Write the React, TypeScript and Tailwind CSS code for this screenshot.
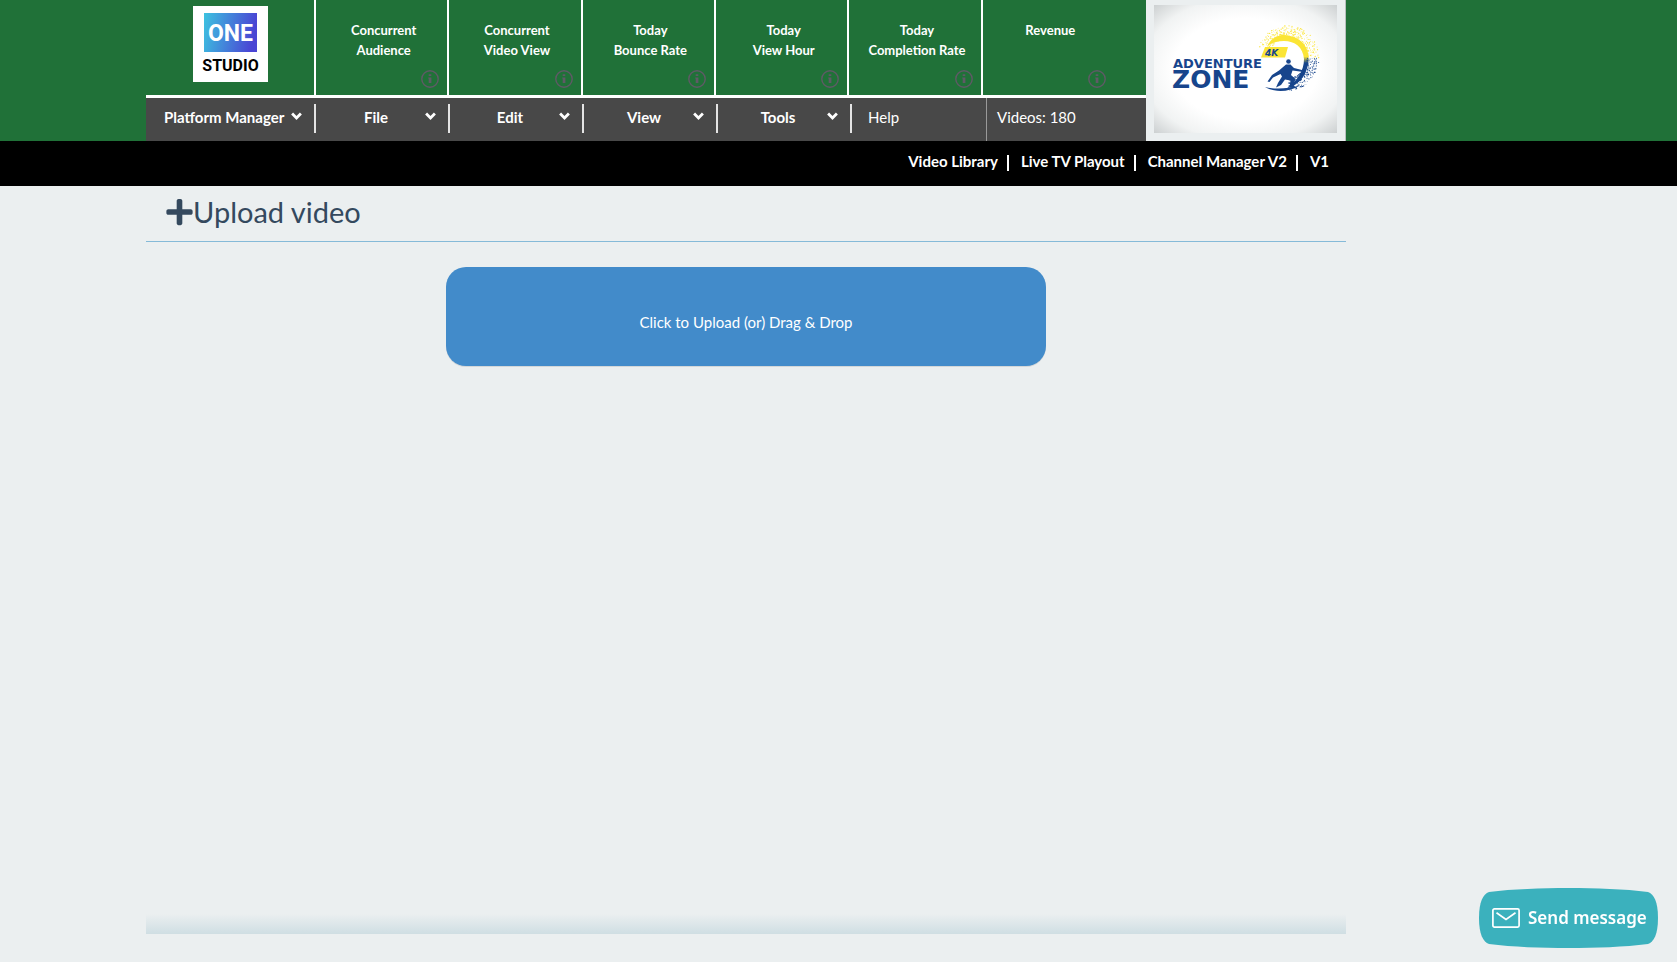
import React from "react";
import { FaPlus } from "react-icons/fa";

const stats = [
  ["Concurrent", "Audience"],
  ["Concurrent", "Video View"],
  ["Today", "Bounce Rate"],
  ["Today", "View Hour"],
  ["Today", "Completion Rate"],
  ["Revenue", ""],
];

const menus = ["File", "Edit", "View", "Tools"];
const links = ["Video Library", "Live TV Playout", "Channel Manager V2", "V1"];

function Chevron({ className = "" }: { className?: string }) {
  return (
    <svg viewBox="0 0 11 8" className={`h-2 w-[11px] ${className}`} aria-hidden="true">
      <path d="M1.100 1.600 5.500 6 9.900 1.600" fill="none" stroke="#fff" strokeWidth="2.800" />
    </svg>
  );
}

function InfoIcon() {
  return (
    <svg viewBox="0 0 18 18" className="size-[18px]" aria-hidden="true">
      <circle cx="9" cy="9" r="8.200" fill="none" stroke="#5f5a66" strokeWidth="1.400" />
      <path d="M7.700 4.200h2.600v1.800H7.700zM7.200 7.400h3.200v5.600H7.700V8.600h-.5z" fill="#5f5a66" />
    </svg>
  );
}

function StudioLogo() {
  return (
    <svg viewBox="0 0 75 76" className="h-[76px] w-[75px]" role="img" aria-label="One Studio">
      <defs>
        <linearGradient id="studio" x1="0" y1="0" x2="1" y2="0.15">
          <stop offset="0" stopColor="#3cc3e0" />
          <stop offset="1" stopColor="#4a45d4" />
        </linearGradient>
      </defs>
      <rect width="75" height="76" fill="#fff" />
      <rect x="11" y="7" width="53" height="39" fill="url(#studio)" />
      <text x="37.5" y="35" textAnchor="middle" fontFamily="Roboto, sans-serif" fontWeight="700" fontSize="23" fill="#fff">
        ONE
      </text>
      <text x="37.5" y="65" textAnchor="middle" fontFamily="Roboto, sans-serif" fontWeight="700" fontSize="16" fill="#000">
        STUDIO
      </text>
    </svg>
  );
}

function noise(n: number) {
  const v = Math.sin(n * 12.9898) * 43758.5453;
  return v - Math.floor(v);
}

// Deterministic spray of droplets around the wave ring.
const spray = Array.from({ length: 760 }, (_, i) => {
  const a = ((-205 + noise(i + 1) * 295) * Math.PI) / 180;
  const r = 19 + 12 * noise(i + 1000) ** 1.5;
  const x = 134 + r * Math.cos(a);
  const y = 53 + r * 1.05 * Math.sin(a);
  return { x, y, s: 0.25 + noise(i + 5000) * 0.4, navy: y > 53 };
}).filter((d) => d.y < 88 && !(d.x < 124 && d.y > 42));

function ChannelLogo() {
  return (
    <svg viewBox="0 0 183 128" className="h-32 w-[183px]" role="img" aria-label="Adventure Zone 4K">
      <defs>
        <radialGradient id="vignette" cx="0.5" cy="0.5" r="0.72">
          <stop offset="0.55" stopColor="#ffffff" />
          <stop offset="0.78" stopColor="#f1f3f3" />
          <stop offset="1" stopColor="#c9cdce" />
        </radialGradient>
        <linearGradient id="wave" x1="0" y1="0" x2="0" y2="1">
          <stop offset="0.4" stopColor="#fbe536" />
          <stop offset="0.52" stopColor="#17458c" />
        </linearGradient>
      </defs>
      <rect width="183" height="128" fill="url(#vignette)" />
      <path
        d="M113 42C117 31 128 28 136 31C150 34 157 46 154 60C151 73 144 80 132 84C143 76 150 66 150 54C149 42 141 36 130 36C122 36 117 38 113 42Z"
        fill="url(#wave)"
      />
      {spray.map((d, i) => (
        <circle key={i} cx={d.x} cy={d.y} r={d.s} fill={d.navy ? "#17458c" : "#fbe536"} />
      ))}
      <path d="M111 42h23l-3 10.500h-24z" fill="#fbe536" />
      <text x="111" y="50.500" fontFamily="DejaVu Sans, sans-serif" fontWeight="700" fontStyle="italic" fontSize="9" fill="#17458c">
        4K
      </text>
      <text x="19" y="63" fontFamily="DejaVu Sans, sans-serif" fontWeight="700" fontSize="13" fill="#17458c">
        ADVENTURE
      </text>
      <text x="18" y="83" fontFamily="DejaVu Sans, sans-serif" fontWeight="700" fontSize="25" fill="#17458c">
        ZONE
      </text>
      <g fill="#17458c">
        <circle cx="134.500" cy="56.500" r="2.300" />
        <path d="M132 59.500L136.500 59.500L140 63L150 65.500L149.500 67L138.500 65.500L137 70L141.500 74L139.500 80L142 83L135.500 82.500L136.500 75.500L131 74.500L127 80L122 82.500L124 78L128 71.500L126.500 69L119 72.500L115.500 77L113.500 76.500L118 70L125 65.500Z" />
        <path d="M111 82c10 2.500 22 2 35-1.500-8 5-18 6.500-26 4.800-4-.8-7-2-9-3.300z" />
      </g>
    </svg>
  );
}

export default function App() {
  return (
    <div className="flex min-h-screen flex-col bg-[#ebeff0] font-['Lato',sans-serif] text-[15px] leading-5">
      <header>
        <div className="bg-[#207138] pl-[146px]">
          <div className="flex max-w-[1200px]">
            <div className="min-w-0 flex-1">
              <div className="flex h-[98px] border-b-[3px] border-white">
                <a href="#home" className="flex w-[168px] shrink-0 justify-center pt-1.5">
                  <StudioLogo />
                </a>
                <div className="grid w-[800px] grid-cols-6">
                  {stats.map(([top, bottom], i) => (
                    <div key={i} className="flex flex-col border-l-2 border-white pt-5">
                      <p className="h-10 pl-1 text-center text-[13px] leading-5 font-bold whitespace-nowrap text-white">
                        {top}
                        <br />
                        {bottom}
                      </p>
                      <button type="button" aria-label={`About ${top} ${bottom}`} className="mt-2.5 mr-2 self-end">
                        <InfoIcon />
                      </button>
                    </div>
                  ))}
                </div>
              </div>
              <nav className="flex h-[43px] bg-[#484848] text-white">
                <button type="button" className="flex w-[168px] shrink-0 items-start gap-[7px] pt-[9px] pl-[18px] font-bold whitespace-nowrap">
                  Platform Manager
                  <Chevron className="mt-[5px]" />
                </button>
                {menus.map((m) => (
                  <div key={m} className="mt-1.5 h-[29px] w-[134px] border-l-2 border-[#e4e4e4] pt-[3px] pr-3">
                    <button type="button" className="relative w-full text-center font-bold">
                      {m}
                      <Chevron className="absolute top-[5px] right-0" />
                    </button>
                  </div>
                ))}
                <div className="mt-1.5 h-[29px] w-[136px] border-l-2 border-[#e4e4e4] pt-[3px] pl-4">
                  <a href="#help">Help</a>
                </div>
                <p className="border-l border-[#999] pt-[9px] pl-2.5">Videos: 180</p>
              </nav>
            </div>
            <div className="flex w-[200px] justify-center border-r border-[#b9bfbf] bg-[#ebeff0] pt-[5px]">
              <ChannelLogo />
            </div>
          </div>
        </div>
        <div className="bg-black pl-[146px]">
          <nav className="flex h-[45px] max-w-[1200px] justify-end pt-2.5 pr-[17px] font-bold text-white">
            {links.map((l, i) => (
              <React.Fragment key={l}>
                {i > 0 && <span className="mt-1 mr-3 ml-[9px] h-4 w-0.5 bg-white" />}
                <a href="#nav">{l}</a>
              </React.Fragment>
            ))}
          </nav>
        </div>
      </header>

      <div className="flex flex-1 flex-col pl-[146px]">
        <main className="max-w-[1200px] flex-1">
          <h1 className="flex h-14 items-start border-b border-[#85bad8] pt-2 pl-5 text-[29px] leading-9 text-[#34495e]">
            <FaPlus className="mt-[3px] h-[30px] w-[27px]" aria-hidden="true" />
            Upload video
          </h1>
          <button
            type="button"
            className="mx-auto mt-[25px] block h-[99px] w-full max-w-[600px] rounded-[20px] bg-[#428bca] pt-2.5 text-white shadow-[0_1px_0_#d3d7d9]"
          >
            Click to Upload (or) Drag &amp; Drop
          </button>
        </main>
        <footer className="mb-7 h-5 max-w-[1200px] bg-linear-to-b from-[#ebeff0] to-[#cfdee3]" />
      </div>

      <button
        type="button"
        className="fixed right-[19px] bottom-3.5 flex h-[60px] w-[179px] items-center gap-2 pl-[13px] font-['Noto_Sans',sans-serif] text-[17px] font-semibold whitespace-nowrap text-white"
      >
        <svg viewBox="0 0 179 60" className="absolute inset-0 -z-10 h-full w-full" aria-hidden="true">
          <path
            d="M0 30C0 14 4 6 10 4C34 1 62 0 89.500 0S145 1 169 4C175 6 179 14 179 30S175 54 169 56C145 59 117 60 89.500 60S34 59 10 56C4 54 0 46 0 30Z"
            fill="#3bb1bd"
          />
        </svg>
        <svg viewBox="0 0 28 20" className="h-5 w-7" fill="none" stroke="#fff" strokeWidth="1.700" aria-hidden="true">
          <rect x="0.900" y="0.900" width="26.200" height="18.200" rx="1.500" />
          <path d="M4.500 4.800 14 11.500 23.500 4.800" />
        </svg>
        Send message
      </button>
    </div>
  );
}
